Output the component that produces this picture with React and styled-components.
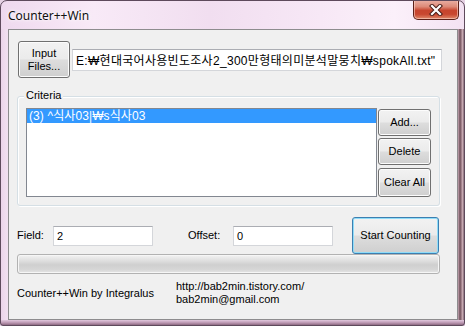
import React from "react";
import styled, { createGlobalStyle } from "styled-components";

const GlobalStyle = createGlobalStyle`
  html, body { margin: 0; padding: 0; background: #e6d2e4; }
  body { width: 465px; height: 326px; overflow: hidden; }
  #root { width: 465px; height: 326px; }
  * { box-sizing: border-box; }
`;

const UI_FONT = `"Liberation Sans", Arial, sans-serif`;
const KR_FONT = `"Liberation Sans", "Noto Sans CJK KR", sans-serif`;

const Frame = styled.div`
  width: 465px;
  height: 326px;
  display: flex;
  flex-direction: column;
  border: 1px solid #5e4a5c;
  border-radius: 7px 7px 3px 3px;
  overflow: hidden;
  padding: 0 6px 5px 7px;
  background:
    linear-gradient(to right, #efd9ee 0%, #f8eaf7 20%, #f1def0 45%, #f6e6f5 65%, #fbf0fa 85%, #f3e2f2 100%) top / 100% 28px no-repeat,
    linear-gradient(to bottom, #e2c8de 0px, #b894ae 3px, #8d6a82 5px) bottom / 100% 5px no-repeat,
    linear-gradient(to right, #ecd4ea 0, #f1dff0 6px, #efdcee 456px, #c6a8b4 457px, #6e4e58 459px, #b4949e 461px, #d7bcc4 462px, #5e4450 463px);
`;

const TitleBar = styled.div`
  height: 28px;
  flex: none;
  display: flex;
  justify-content: space-between;
  align-items: flex-start;
`;

const Title = styled.div`
  font-family: "Noto Sans", "Open Sans", sans-serif;
  font-size: 12px;
  line-height: 16px;
  color: #111;
  margin-top: 7px;
  text-shadow: 0 0 6px #fff, 0 0 3px #fff;
`;

const CloseButton = styled.div`
  width: 46px;
  height: 20px;
  margin-top: -1px;
  margin-right: -1px;
  border: 1px solid #5b2018;
  border-top: none;
  border-radius: 0 0 5px 5px;
  background: linear-gradient(to bottom, #eab1a6 0%, #dd8a78 35%, #c7452e 55%, #c8472f 75%, #e08a6c 100%);
  box-shadow: inset 0 0 0 1px rgba(255, 220, 210, 0.55);
  display: flex;
  align-items: center;
  justify-content: center;
`;

const Client = styled.div`
  flex: 1;
  display: flex;
  flex-direction: column;
  border: 1px solid #8d8c8e;
  background: #f0f0f0;
  padding: 11px 16px 0 8px;
  font-family: ${UI_FONT};
  font-size: 11px;
  color: #000;
`;

const TopRow = styled.div`
  display: flex;
  align-items: center;
  gap: 2px;
  padding-left: 1px;
`;

const Button = styled.button`
  width: ${(p) => p.$w}px;
  height: ${(p) => p.$h}px;
  margin: 0;
  padding: 0;
  flex: none;
  font-family: ${UI_FONT};
  font-size: 11px;
  line-height: 13px;
  color: #000;
  border: 1px solid ${(p) => (p.$focused ? "#3c7fb1" : "#707070")};
  border-radius: 3px;
  background: linear-gradient(to bottom, #f2f2f2 0%, #ebebeb 48%, #dddddd 52%, #cfcfcf 100%);
  box-shadow: inset 0 0 0 1px ${(p) => (p.$focused ? "#8fdcf8" : "#fcfcfc")};
`;

const TextBox = styled.div`
  width: ${(p) => p.$w}px;
  height: ${(p) => p.$h}px;
  flex: none;
  display: flex;
  align-items: center;
  padding-left: 3px;
  background: #fff;
  border: 1px solid #d4d6da;
  border-top-color: #abadb3;
  font-family: ${(p) => (p.$kr ? KR_FONT : UI_FONT)};
  font-size: ${(p) => (p.$kr ? 12 : 11)}px;
  letter-spacing: ${(p) => (p.$kr ? "0.3px" : "normal")};
  white-space: nowrap;
  overflow: hidden;
  color: #000;
`;

const Group = styled.div`
  position: relative;
  margin-top: 18px;
  width: 423px;
  height: 110px;
  border: 1px solid #d5dfe5;
  border-radius: 3px;
  box-shadow: 1px 1px 0 #fff, inset 1px 1px 0 #fff;
  padding: 11px 8px 8px 8px;
  display: flex;
  gap: 1px;
`;

const GroupLabel = styled.span`
  position: absolute;
  left: 6px;
  top: -8px;
  padding: 0 2px;
  background: #f0f0f0;
  font-size: 11px;
  line-height: 13px;
`;

const ListBox = styled.div`
  width: 351px;
  height: 89px;
  background: #fff;
  border: 1px solid #828790;
  padding: 0;
`;

const ListItem = styled.div`
  height: 14px;
  line-height: 14px;
  padding-left: 2px;
  font-family: ${KR_FONT};
  font-size: 12px;
  letter-spacing: 0.1px;
  white-space: nowrap;
  background: ${(p) => (p.$selected ? "#3399ff" : "transparent")};
  color: ${(p) => (p.$selected ? "#fff" : "#000")};
`;

const ButtonColumn = styled.div`
  display: flex;
  flex-direction: column;
  padding-top: 1px;
  gap: 2px;
`;

const ControlRow = styled.div`
  margin-top: 11px;
  height: 37px;
  display: flex;
  align-items: center;
`;

const Label = styled.span`
  width: ${(p) => p.$w}px;
  margin-left: ${(p) => p.$ml || 0}px;
  flex: none;
  margin-top: -2px;
`;

const Progress = styled.div`
  width: 423px;
  height: 20px;
  border: 1px solid #b2b2b2;
  border-radius: 3px;
  background: linear-gradient(to bottom, #f3f3f3 0%, #e0e0e0 30%, #cfcfcf 55%, #d6d6d6 80%, #e6e6e6 100%);
  box-shadow: inset 0 0 0 1px #f6f6f6;
`;

const Footer = styled.div`
  margin-top: 6px;
  display: flex;
  align-items: center;
  line-height: 13px;
`;

const Credit = styled.div`
  width: 159px;
  flex: none;
`;

const Contact = styled.div`
  display: flex;
  flex-direction: column;
`;

function CloseIcon() {
  return (
    <svg width="14" height="12" viewBox="0 0 14 12">
      <path d="M3 2 L11 10 M11 2 L3 10" stroke="#4a1e18" strokeWidth="4.2" strokeLinecap="square" />
      <path d="M3 2 L11 10 M11 2 L3 10" stroke="#ffffff" strokeWidth="2.2" strokeLinecap="square" />
    </svg>
  );
}

export default function App() {
  return (
    <>
      <GlobalStyle />
      <Frame>
        <TitleBar>
          <Title>Counter++Win</Title>
          <CloseButton>
            <CloseIcon />
          </CloseButton>
        </TitleBar>
        <Client>
          <TopRow>
            <Button $w={52} $h={37}>
              Input
              <br />
              Files...
            </Button>
            <TextBox $w={370} $h={22} $kr>
              E:₩현대국어사용빈도조사2_300만형태의미분석말뭉치₩spokAll.txt"
            </TextBox>
          </TopRow>
          <Group>
            <GroupLabel>Criteria</GroupLabel>
            <ListBox>
              <ListItem $selected>(3) ^식사03|₩s식사03</ListItem>
            </ListBox>
            <ButtonColumn>
              <Button $w={53} $h={27}>Add...</Button>
              <Button $w={53} $h={27}>Delete</Button>
              <Button $w={53} $h={29} style={{ marginTop: 1 }}>Clear All</Button>
            </ButtonColumn>
          </Group>
          <ControlRow>
            <Label $w={36}>Field:</Label>
            <TextBox $w={100} $h={20}>2</TextBox>
            <Label $w={45} $ml={35}>Offset:</Label>
            <TextBox $w={100} $h={20}>0</TextBox>
            <Button $w={87} $h={37} $focused style={{ marginLeft: 19 }}>
              Start Counting
            </Button>
          </ControlRow>
          <Progress />
          <Footer>
            <Credit>Counter++Win by Integralus</Credit>
            <Contact>
              <span>http://bab2min.tistory.com/</span>
              <span>bab2min@gmail.com</span>
            </Contact>
          </Footer>
        </Client>
      </Frame>
    </>
  );
}
